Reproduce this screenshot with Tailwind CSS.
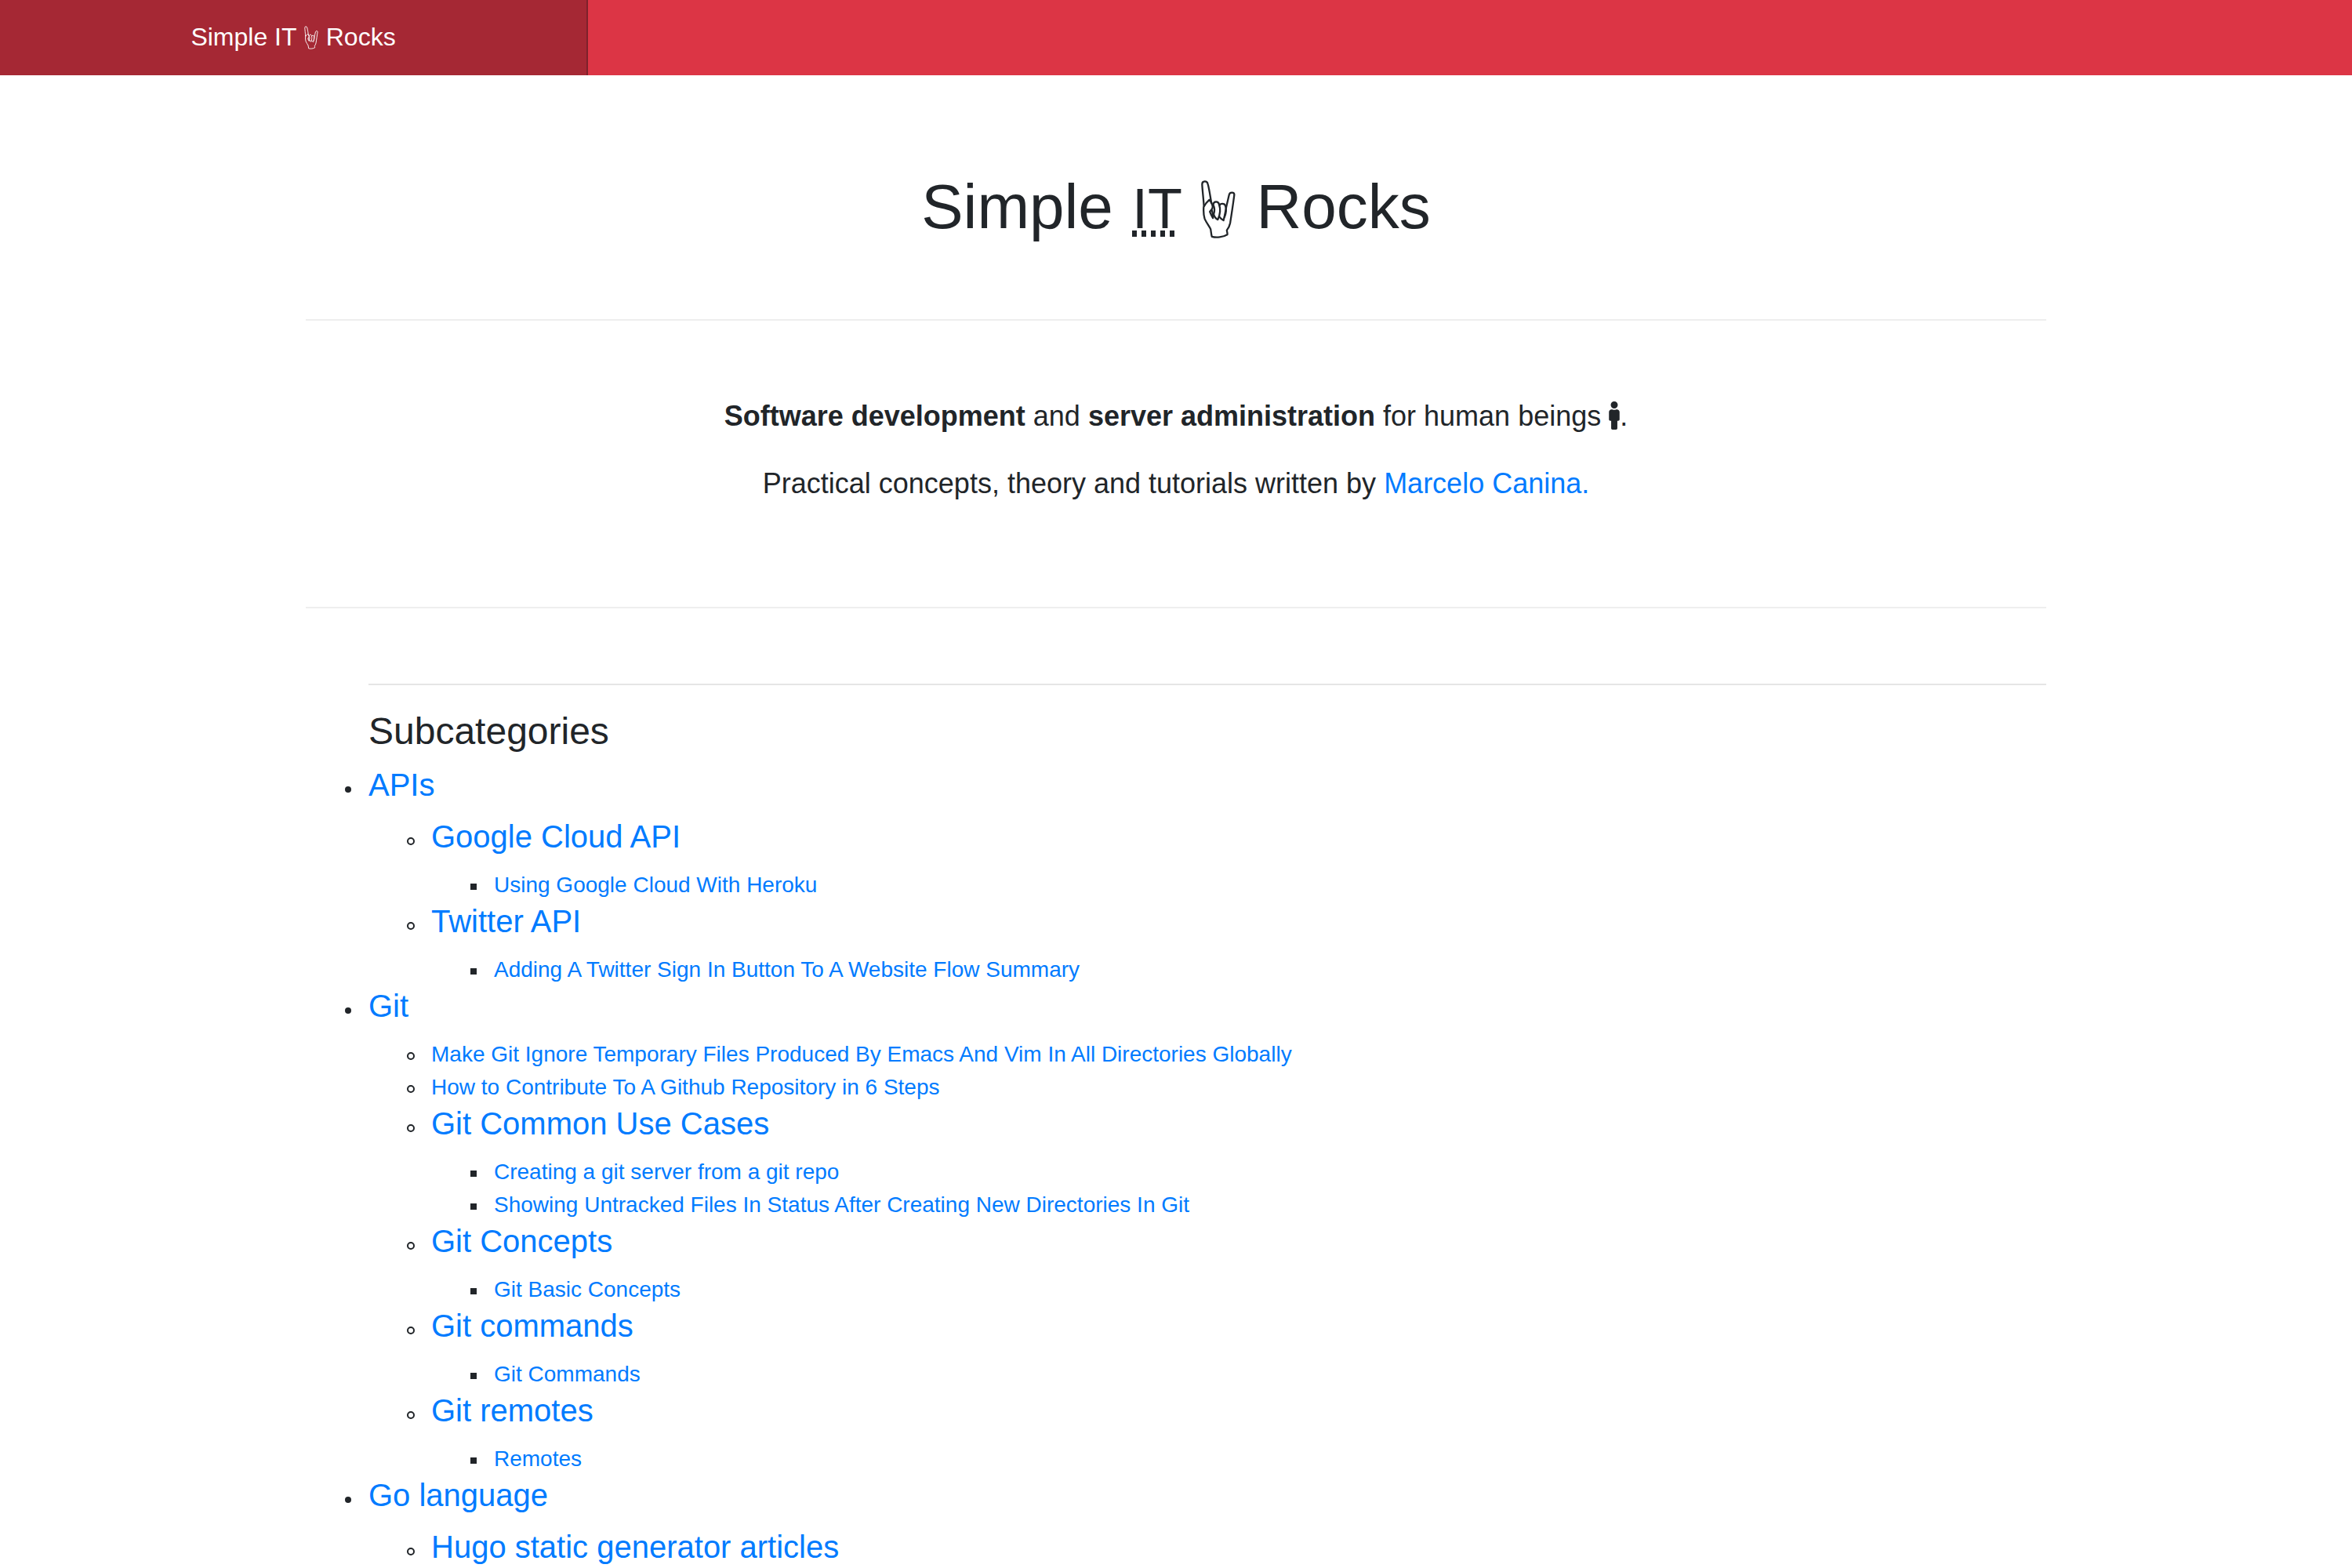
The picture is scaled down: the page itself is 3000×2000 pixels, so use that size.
<!DOCTYPE html>
<html lang="en">
<head>
<meta charset="utf-8">
<title>Simple IT Rocks</title>
<script src="https://cdn.jsdelivr.net/npm/@tailwindcss/browser@4"></script>
</head>
<body class="bg-white font-['Liberation_Sans',Arial,sans-serif] text-[28px] leading-[42px] text-[#212529]">
<svg class="hidden" aria-hidden="true">
  <symbol id="horns" viewBox="96 60 134 230">
    <g fill="none" stroke="currentColor" stroke-width="7" stroke-linejoin="round" stroke-linecap="round">
      <path d="M107 162C105 130 101 100 100 78C100 63 119 63 122 76C128 97 131 122 136 150"/>
      <path d="M136 150C134 145 132 140 128 138C121 144 112 154 106 166C105 182 106 200 110 212C117 228 127 240 133 252C135 262 135 272 138 281C156 286 181 283 198 273C199 267 196 261 196 256C203 247 207 238 209 228C215 190 221 150 225 118C225 108 208 107 205 118C201 135 198 148 194 165C191 182 188 200 183 218C176 214 170 209 166 203"/>
      <path d="M136 150C141 158 142 168 138 174L130 184C134 194 138 202 142 209C143 198 142 187 137 176"/>
      <path d="M143 157C145 141 164 143 166 156C172 173 169 197 161 215C152 210 147 204 145 194C150 182 148 168 143 157Z"/>
      <path d="M168 159C171 151 187 151 190 160C194 170 193 190 187 205"/>
    </g>
  </symbol>
  <symbol id="male" viewBox="0 0 192 512">
    <path fill="currentColor" d="M96 0c35.346 0 64 28.654 64 64s-28.654 64-64 64-64-28.654-64-64S60.654 0 96 0m48 144h-11.36c-22.711 10.443-49.59 10.894-73.28 0H48c-26.51 0-48 21.49-48 48v136c0 13.255 10.745 24 24 24h16v136c0 13.255 10.745 24 24 24h64c13.255 0 24-10.745 24-24V352h16c13.255 0 24-10.745 24-24V192c0-26.51-21.49-48-48-48z"/>
  </symbol>
</svg>

<nav class="flex h-24 bg-[#dc3545]">
  <a href="#" class="flex w-1/4 items-center justify-center border-r-2 border-[#7e222b] bg-[#a52834] pb-0.5 text-[32px] leading-[48px] text-white">
    <span>Simple IT <svg class="mx-px inline-block h-[30px] w-[18px] align-[-5px]" aria-hidden="true"><use href="#horns"/></svg> Rocks</span>
  </a>
</nav>

<main class="mx-auto max-w-[2220px]">
  <h1 class="pt-[117px] pb-[92px] text-center text-[80px] leading-[102px]">Simple <abbr title="Information Technology" class="relative ml-0.5 text-[72px] leading-none no-underline after:absolute after:bottom-1 after:left-0 after:h-2 after:w-[54px] after:bg-[repeating-linear-gradient(90deg,#212529_0_6px,transparent_6px_12px)]">IT</abbr> <svg class="mr-1 ml-0.5 inline-block h-[76px] w-11 align-[-14px]" aria-hidden="true"><use href="#horns"/></svg> Rocks</h1>
  <hr class="border-t-2 border-[#eee]">
  <div class="pt-[95px] pb-[130px] text-center text-[36px] leading-[54px]">
    <p class="mb-8"><strong>Software development</strong> and <strong>server administration</strong> for human beings <svg class="inline-block h-9 w-[14px] align-[-5px]" aria-hidden="true"><use href="#male"/></svg>.</p>
    <p>Practical concepts, theory and tutorials written by <a href="#" class="text-[#007bff]">Marcelo Canina.</a></p>
  </div>
  <hr class="border-t-2 border-[#eee]">

  <section class="mt-24 pl-20">
    <hr class="border-t-2 border-[#e5e5e5]">
    <h3 class="mt-[30px] mb-[14px] text-[48px] leading-[58px]">Subcategories</h3>
    <ul>
      <li class="relative before:absolute before:top-[27px] before:-left-[30px] before:size-2 before:rounded-full before:bg-[#212529]">
        <h4 class="mb-4 text-[40px] leading-[50px]"><a href="#" class="text-[#007bff]">APIs</a></h4>
        <ul class="pl-20">
          <li class="relative before:absolute before:top-[26px] before:-left-[31px] before:size-2.5 before:rounded-full before:border-2 before:border-[#212529]">
            <h4 class="mb-4 text-[40px] leading-[50px]"><a href="#" class="text-[#007bff]">Google Cloud API</a></h4>
            <ul class="pl-20">
              <li class="relative before:absolute before:top-[19px] before:-left-[30px] before:size-2 before:bg-[#212529]"><a href="#" class="text-[#007bff]">Using Google Cloud With Heroku</a></li>
            </ul>
          </li>
          <li class="relative before:absolute before:top-[26px] before:-left-[31px] before:size-2.5 before:rounded-full before:border-2 before:border-[#212529]">
            <h4 class="mb-4 text-[40px] leading-[50px]"><a href="#" class="text-[#007bff]">Twitter API</a></h4>
            <ul class="pl-20">
              <li class="relative before:absolute before:top-[19px] before:-left-[30px] before:size-2 before:bg-[#212529]"><a href="#" class="text-[#007bff]">Adding A Twitter Sign In Button To A Website Flow Summary</a></li>
            </ul>
          </li>
        </ul>
      </li>
      <li class="relative before:absolute before:top-[27px] before:-left-[30px] before:size-2 before:rounded-full before:bg-[#212529]">
        <h4 class="mb-4 text-[40px] leading-[50px]"><a href="#" class="text-[#007bff]">Git</a></h4>
        <ul class="pl-20">
          <li class="relative before:absolute before:top-[18px] before:-left-[31px] before:size-2.5 before:rounded-full before:border-2 before:border-[#212529]"><a href="#" class="text-[#007bff]">Make Git Ignore Temporary Files Produced By Emacs And Vim In All Directories Globally</a></li>
          <li class="relative before:absolute before:top-[18px] before:-left-[31px] before:size-2.5 before:rounded-full before:border-2 before:border-[#212529]"><a href="#" class="text-[#007bff]">How to Contribute To A Github Repository in 6 Steps</a></li>
          <li class="relative before:absolute before:top-[26px] before:-left-[31px] before:size-2.5 before:rounded-full before:border-2 before:border-[#212529]">
            <h4 class="mb-4 text-[40px] leading-[50px]"><a href="#" class="text-[#007bff]">Git Common Use Cases</a></h4>
            <ul class="pl-20">
              <li class="relative before:absolute before:top-[19px] before:-left-[30px] before:size-2 before:bg-[#212529]"><a href="#" class="text-[#007bff]">Creating a git server from a git repo</a></li>
              <li class="relative before:absolute before:top-[19px] before:-left-[30px] before:size-2 before:bg-[#212529]"><a href="#" class="text-[#007bff]">Showing Untracked Files In Status After Creating New Directories In Git</a></li>
            </ul>
          </li>
          <li class="relative before:absolute before:top-[26px] before:-left-[31px] before:size-2.5 before:rounded-full before:border-2 before:border-[#212529]">
            <h4 class="mb-4 text-[40px] leading-[50px]"><a href="#" class="text-[#007bff]">Git Concepts</a></h4>
            <ul class="pl-20">
              <li class="relative before:absolute before:top-[19px] before:-left-[30px] before:size-2 before:bg-[#212529]"><a href="#" class="text-[#007bff]">Git Basic Concepts</a></li>
            </ul>
          </li>
          <li class="relative before:absolute before:top-[26px] before:-left-[31px] before:size-2.5 before:rounded-full before:border-2 before:border-[#212529]">
            <h4 class="mb-4 text-[40px] leading-[50px]"><a href="#" class="text-[#007bff]">Git commands</a></h4>
            <ul class="pl-20">
              <li class="relative before:absolute before:top-[19px] before:-left-[30px] before:size-2 before:bg-[#212529]"><a href="#" class="text-[#007bff]">Git Commands</a></li>
            </ul>
          </li>
          <li class="relative before:absolute before:top-[26px] before:-left-[31px] before:size-2.5 before:rounded-full before:border-2 before:border-[#212529]">
            <h4 class="mb-4 text-[40px] leading-[50px]"><a href="#" class="text-[#007bff]">Git remotes</a></h4>
            <ul class="pl-20">
              <li class="relative before:absolute before:top-[19px] before:-left-[30px] before:size-2 before:bg-[#212529]"><a href="#" class="text-[#007bff]">Remotes</a></li>
            </ul>
          </li>
        </ul>
      </li>
      <li class="relative before:absolute before:top-[27px] before:-left-[30px] before:size-2 before:rounded-full before:bg-[#212529]">
        <h4 class="mb-4 text-[40px] leading-[50px]"><a href="#" class="text-[#007bff]">Go language</a></h4>
        <ul class="pl-20">
          <li class="relative before:absolute before:top-[26px] before:-left-[31px] before:size-2.5 before:rounded-full before:border-2 before:border-[#212529]">
            <h4 class="text-[40px] leading-[50px]"><a href="#" class="text-[#007bff]">Hugo static generator articles</a></h4>
          </li>
        </ul>
      </li>
    </ul>
  </section>
</main>
</body>
</html>
